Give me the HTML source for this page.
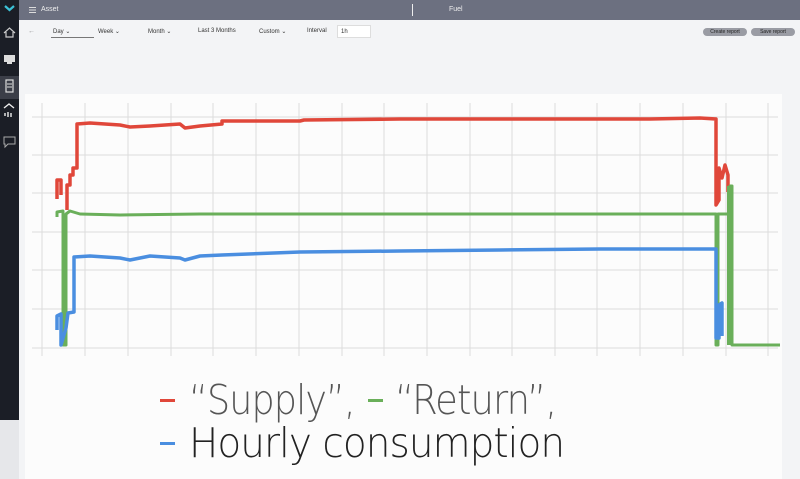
<!DOCTYPE html>
<html><head><meta charset="utf-8"><style>
*{margin:0;padding:0;box-sizing:border-box}
body{width:800px;height:479px;overflow:hidden;background:#f3f4f6;font-family:"Liberation Sans",sans-serif;position:relative}
.sb{position:absolute;left:0;top:0;width:19px;height:420px;background:#1b1e26}
.sb2{position:absolute;left:0;top:420px;width:19px;height:59px;background:#e6e7ea}
.top{position:absolute;left:19px;top:0;width:781px;height:20px;background:#6c7080}
.t{position:absolute;font-size:7px;color:#333}
.btn{position:absolute;top:28px;height:8px;border-radius:4px;background:#9a9ca4;font-size:5px;color:#222;text-align:center;line-height:8px}
.panel{position:absolute;left:25px;top:94px;width:757px;height:385px;background:#fcfcfc}
.leg{position:absolute;font-size:41px;letter-spacing:-1px;font-family:"DejaVu Sans","Liberation Sans",sans-serif;font-weight:200;transform:scaleX(0.95);transform-origin:left;white-space:nowrap}
</style></head><body>
<div class="sb"></div><div class="sb2"></div>
<div style="position:absolute;left:0;top:76px;width:19px;height:23px;background:#3b3e48"></div>
<svg style="position:absolute;left:0;top:0" width="19" height="150">
<path d="M5 6 L9.5 10 L14 6" stroke="#3cc1d6" stroke-width="2.2" fill="none"/>
<path d="M4 33 L9.5 28 L15 33 M6 32 V37 H13 V32" stroke="#ccc" stroke-width="1.2" fill="none"/>
<rect x="4" y="55" width="11" height="7" fill="#ddd"/><rect x="7" y="62" width="5" height="2" fill="#ddd"/>
<rect x="6" y="80" width="7" height="12" fill="none" stroke="#ddd" stroke-width="1.2"/><path d="M7 84H12M7 87H12" stroke="#ddd"/>
<path d="M4 108 L9 104 L14 108 M5 116 V113 M8 117V112 M11 117V113" stroke="#eee" stroke-width="1.4" fill="none"/>
<path d="M4 137 H15 V144 H8 L5 147 V144 H4 Z" stroke="#aaa" stroke-width="1" fill="none"/>
</svg>
<div class="top"></div>
<svg style="position:absolute;left:28px;top:6px" width="10" height="8"><path d="M1 1.5H8M1 4H8M1 6.5H8" stroke="#ddd" stroke-width="0.9"/></svg>
<div class="t" style="left:41px;top:6px;color:#eee">Asset</div>
<div style="position:absolute;left:412px;top:4px;width:1px;height:12px;background:#eee"></div>
<div class="t" style="left:449px;top:6px;color:#eee">Fuel</div>
<div class="t" style="left:28px;top:28px;color:#999">←</div>
<div class="t" style="left:53px;top:28px;font-size:6px">Day ⌄</div>
<div style="position:absolute;left:51px;top:37px;width:43px;height:1px;background:#777"></div>
<div class="t" style="left:98px;top:28px;font-size:6px">Week ⌄</div>
<div class="t" style="left:148px;top:28px;font-size:6px">Month ⌄</div>
<div class="t" style="left:198px;top:28px;font-size:6px">Last 3 Months</div>
<div class="t" style="left:259px;top:28px;font-size:6px">Custom ⌄</div>
<div class="t" style="left:307px;top:28px;font-size:6px">Interval</div>
<div style="position:absolute;left:337px;top:25px;width:34px;height:13px;background:#fff;border:1px solid #ddd;font-size:6px;padding:3px 3px;color:#333">1h</div>
<div class="btn" style="left:703px;width:44px">Create report</div>
<div class="btn" style="left:751px;width:44px">Save report</div>
<div class="panel"></div>
<svg style="position:absolute;left:0;top:0" width="800" height="479">
<g stroke="#dcdcdc" stroke-width="1">
<path d="M32 117H778M32 155H778M32 193H778M32 232H778M32 270H778M32 309H778M32 348H778"/>
<path d="M42 103V356M85 103V356M128 103V356M171 103V356M213 103V356M256 103V356M299 103V356M342 103V356M384 103V356M427 103V356M470 103V356M512 103V356M555 103V356M597 103V356M640 103V356M683 103V356M726 103V356M768 103V356"/>
</g>
<g fill="none" stroke-linejoin="round">
<path d="M57 199V180H61V195M67 210V185H70V175H73V168H77V124L90 123L120 125L130 127L150 126L180 124L185 128L200 126L222 124L222 121L300 121L304 120L400 119L500 119L600 119L650 119L700 118L716 119V205L719 200V168L722 178L725 165L728 175V192" stroke="#e0473a" stroke-width="3.5"/>
<path d="M57 217V212L63 211V345L66 345V214L70 211L80 214L120 215L200 214L300 214L400 214L500 214L600 214L716 214V345L718 345V214L730 214V186L732 186V345L780 345" stroke="#6aaf5a" stroke-width="3"/>
<path d="M57 330V316L61 314V345L66 328L68 313L74 312V257L90 256L120 258L130 260L150 256L180 258L185 260L200 256L222 255L300 252L400 251L500 250L600 249L716 249V338L719 338V305L722 303V336" stroke="#4a8ee0" stroke-width="3.5"/>
<path d="M729 186V345" stroke="#6aaf5a" stroke-width="4"/>
</g>
<rect x="160" y="399" width="15" height="3" fill="#e0473a"/>
<rect x="368" y="399" width="15" height="3" fill="#6aaf5a"/>
<rect x="160" y="442" width="15" height="3" fill="#4a8ee0"/>
</svg>
<div class="leg" style="top:376px;left:189px;color:#555;transform:scaleX(0.89)">“Supply”,</div>
<div class="leg" style="top:376px;left:395px;color:#555;transform:scaleX(0.9)">“Return”,</div>
<div class="leg" style="top:419px;left:189px;color:#222">Hourly consumption</div>
</body></html>
